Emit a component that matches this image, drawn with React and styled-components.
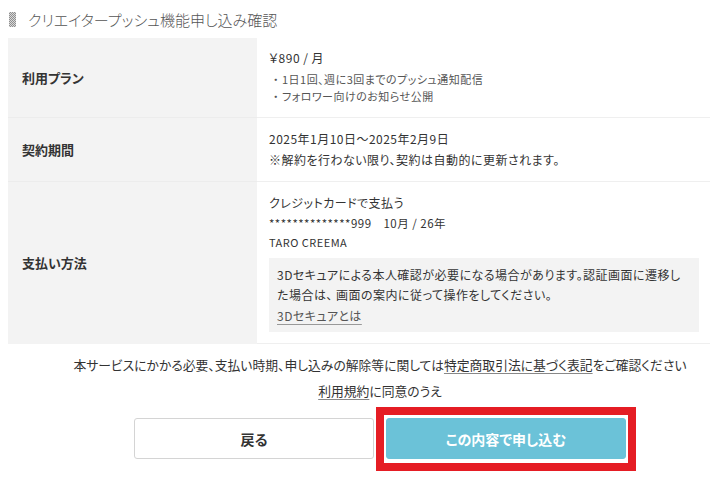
import React from "react";
import styled, { createGlobalStyle } from "styled-components";

const GlobalStyle = createGlobalStyle`
  html, body {
    margin: 0;
    padding: 0;
    background: #fff;
    overflow: hidden;
  }
  body {
    font-family: "Noto Sans CJK JP", "Noto Sans", sans-serif;
    color: #333;
    font-feature-settings: "palt";
  }
`;

const Page = styled.div`
  width: 710px;
  padding: 0 0 30px 8px;
  box-sizing: border-box;
`;

const Header = styled.h1`
  margin: 0;
  height: 38px;
  display: flex;
  align-items: center;
  gap: 12px;
  padding-left: 1px;
  font-size: 15px;
  font-weight: 300;
  color: #555;
`;

const HeaderMark = styled.span`
  display: block;
  width: 7px;
  height: 15px;
  background: repeating-conic-gradient(#8f8f8f 0 25%, #d8d8d8 0 50%) 0 0 / 2px 2px;
`;

const Table = styled.div`
  display: grid;
  grid-template-columns: 249px 1fr;
`;

const Label = styled.div`
  background: #f3f3f3;
  display: flex;
  align-items: center;
  padding-left: 14px;
  font-size: 13px;
  font-weight: 700;
  color: #333;
  border-bottom: 1px solid ${(p) => (p.$last ? "#f3f3f3" : "#ececec")};
`;

const Value = styled.div`
  padding: ${(p) => p.$pad || "10px 11px 10px 12px"};
  border-bottom: 1px solid #efefef;
  font-size: 12px;
  letter-spacing: 0.04em;
  color: #333;
`;

const Line = styled.div`
  line-height: ${(p) => p.$lh || 21}px;
  font-size: ${(p) => p.$fs || 12}px;
`;

const Bullets = styled.ul`
  margin: 3px 0 0;
  padding: 0 0 0 4px;
  list-style: none;
  font-size: 11px;
  color: #555;
`;

const Bullet = styled.li`
  line-height: 17px;
  &::before {
    content: "・";
    margin-right: 3px;
  }
`;

const Note = styled.div`
  margin-top: 7px;
  background: #f3f3f3;
  padding: 7px 10px 6px 8px;
`;

const NoteText = styled.p`
  margin: 0;
  line-height: 20px;
  font-size: 12px;
  color: #333;
`;

const NoteLink = styled.a`
  display: inline-block;
  margin-top: 1px;
  line-height: 20px;
  color: #555;
  text-decoration: underline;
  text-decoration-color: #999;
  text-underline-offset: 3px;
`;

const Footer = styled.div`
  padding-left: 42px;
  display: flex;
  flex-direction: column;
  align-items: center;
`;

const Notice = styled.p`
  margin: ${(p) => p.$m || "0"};
  font-size: 12.8px;
  line-height: 20px;
  color: #333;
  white-space: nowrap;
`;

const InlineLink = styled.a`
  color: #333;
  text-decoration: underline;
  text-decoration-color: #888;
  text-underline-offset: 3px;
`;

const Buttons = styled.div`
  margin-top: 17px;
  display: flex;
  gap: 12px;
`;

const Button = styled.button`
  display: block;
  width: 240px;
  height: 41px;
  border-radius: 3px;
  font-family: inherit;
  font-feature-settings: "palt";
  font-size: 14px;
  font-weight: 700;
  cursor: pointer;
  border: 1px solid ${(p) => (p.$primary ? "#6bc2d8" : "#d4d4d4")};
  background: ${(p) => (p.$primary ? "#6bc2d8" : "#fff")};
  color: ${(p) => (p.$primary ? "#fff" : "#333")};
`;

const Highlight = styled.div`
  position: relative;
  display: flex;
  &::before {
    content: "";
    position: absolute;
    top: -11px;
    left: -10px;
    right: -10px;
    bottom: -12px;
    border: 8px solid #e51d24;
    pointer-events: none;
  }
`;

export default function App() {
  return (
    <>
      <GlobalStyle />
      <Page>
        <Header>
          <HeaderMark />
          クリエイタープッシュ機能申し込み確認
        </Header>
        <Table>
          <Label>利用プラン</Label>
          <Value $pad="10px 11px 12px 12px">
            <Line $lh={20}>￥890 / 月</Line>
            <Bullets>
              <Bullet>1日1回、週に3回までのプッシュ通知配信</Bullet>
              <Bullet>フォロワー向けのお知らせ公開</Bullet>
            </Bullets>
          </Value>

          <Label>契約期間</Label>
          <Value $pad="10px 11px 11px 12px">
            <Line>2025年1月10日〜2025年2月9日</Line>
            <Line>※解約を行わない限り、契約は自動的に更新されます。</Line>
          </Value>

          <Label $last>支払い方法</Label>
          <Value $pad="11px 11px 11px 12px">
            <Line $lh={20}>クレジットカードで支払う</Line>
            <Line $lh={20} $fs={11.5}>
              **************999　10月 / 26年
            </Line>
            <Line $lh={18} $fs={11}>TARO CREEMA</Line>
            <Note>
              <NoteText>
                3Dセキュアによる本人確認が必要になる場合があります。認証画面に遷移し
                <br />
                た場合は、&nbsp;画面の案内に従って操作をしてください。
              </NoteText>
              <NoteLink href="#">3Dセキュアとは</NoteLink>
            </Note>
          </Value>
        </Table>
        <Footer>
          <Notice $m="11px 0 0">
            本サービスにかかる必要、支払い時期、申し込みの解除等に関しては
            <InlineLink href="#">特定商取引法に基づく表記</InlineLink>
            をご確認ください
          </Notice>
          <Notice $m="6px 0 0">
            <InlineLink href="#">利用規約</InlineLink>に同意のうえ
          </Notice>
          <Buttons>
            <Button>戻る</Button>
            <Highlight>
              <Button $primary>この内容で申し込む</Button>
            </Highlight>
          </Buttons>
        </Footer>
      </Page>
    </>
  );
}
